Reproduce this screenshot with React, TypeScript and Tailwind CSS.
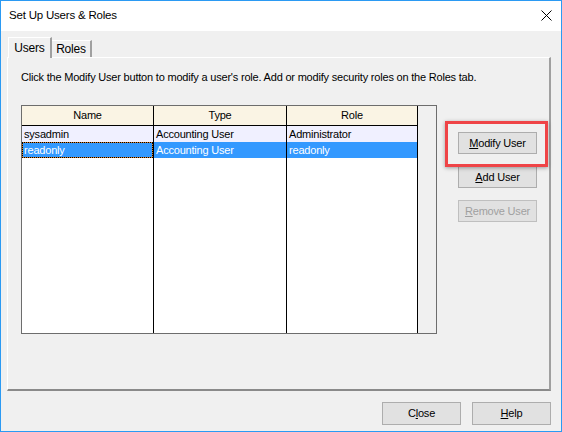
import React from 'react'

const FONT = { fontFamily: '"Liberation Sans", Arial, sans-serif' }

function Btn({ children, disabled, className = '' }: { children: React.ReactNode; disabled?: boolean; className?: string }) {
  return (
    <button
      className={`h-[22px] w-[79px] border border-[#adadad] bg-[#e1e1e1] text-[11px] leading-none flex items-center justify-center ${
        disabled ? 'text-[#a0a0a0] border-[#bfbfbf] bg-[#cccccc]' : 'text-black'
      } ${className}`}
    >
      {children}
    </button>
  )
}

const rows = [
  { name: 'sysadmin', type: 'Accounting User', role: 'Administrator' },
  { name: 'readonly', type: 'Accounting User', role: 'readonly' },
]

export default function App() {
  return (
    <div
      className="relative w-[562px] h-[432px] bg-[#f0f0f0] border border-[#2b9af3] flex flex-col text-black overflow-hidden tracking-[-0.2px]"
      style={FONT}
    >
      {/* title bar */}
      <div className="h-[30px] bg-white flex items-center justify-between pl-2 pr-[9px] shrink-0">
        <span className="text-[11.5px] tracking-[-0.2px]">Set Up Users &amp; Roles</span>
        <svg width="11" height="11" viewBox="0 0 11 11" className="mt-[-1px]">
          <path d="M0.5 0.5 L10.5 10.5 M10.5 0.5 L0.5 10.5" stroke="#000" strokeWidth="1" />
        </svg>
      </div>

      <div className="pt-[6px] pl-[6px]">
        {/* tabs */}
        <div className="flex items-end h-[20px] ml-px">
          <div className="relative z-10 -mb-px h-[21px] w-[44px] bg-[#f0f0f0] border-l border-t border-white border-r-2 border-r-[#a0a0a0] flex items-center justify-center text-[12px] pb-px">
            Users
          </div>
          <div className="h-[17px] w-[40px] border-t border-white border-r-2 border-r-[#a0a0a0] flex items-center justify-center text-[12px]">
            Roles
          </div>
        </div>

        {/* panel */}
        <div className="w-[544px] h-[334px] border-l border-t border-white border-r-2 border-b-2 border-r-[#a0a0a0] border-b-[#8a8a8a] pl-[13px] pt-[13px]">
          <p className="text-[11px] leading-[13px]">
            Click the Modify User button to modify a user's role. Add or modify security roles on the Roles tab.
          </p>

          <div className="flex mt-[21px]">
            {/* table */}
            <div className="w-[416px] h-[229px] border border-[#6d6d6d] bg-[#f0f0f0] flex">
              {[
                { key: 'name', title: 'Name', w: 'w-[132px]' },
                { key: 'type', title: 'Type', w: 'w-[133px]' },
                { key: 'role', title: 'Role', w: 'w-[131px]' },
              ].map((col, ci) => (
                <div key={col.key} className={`${col.w} h-full bg-white border-r border-black flex flex-col text-[11px]`}>
                  <div className="h-[20px] bg-[#faf4e4] border-b border-black flex items-center justify-center">
                    {col.title}
                  </div>
                  {rows.map((r, ri) => {
                    const selected = ri === 1
                    const text = r[col.key as keyof typeof r]
                    if (selected && ci === 0) {
                      return (
                        <div key={ri} className="h-[16px] bg-[#d9822b] border border-dotted border-black">
                          <div className="h-full bg-[#3399ff] text-white pl-px flex items-center">{text}</div>
                        </div>
                      )
                    }
                    return (
                      <div
                        key={ri}
                        className={`h-[16px] pl-[2px] flex items-center ${
                          selected ? 'bg-[#3399ff] text-white' : 'bg-[#f0f0ff]'
                        }`}
                      >
                        {text}
                      </div>
                    )
                  })}
                </div>
              ))}
            </div>

            {/* side buttons */}
            <div className="ml-[21px] mt-[27px] flex flex-col gap-[12px]">
              <Btn>
                <span>
                  <u>M</u>odify User
                </span>
              </Btn>
              <Btn>
                <span>
                  <u>A</u>dd User
                </span>
              </Btn>
              <Btn disabled>
                <span>
                  <u>R</u>emove User
                </span>
              </Btn>
            </div>
          </div>
        </div>

        {/* bottom buttons */}
        <div className="flex justify-end gap-[11px] mt-[11px] w-[544px]">
          <Btn className="h-[23px]">
            <span>
              C<u>l</u>ose
            </span>
          </Btn>
          <Btn className="h-[23px]">
            <span>
              <u>H</u>elp
            </span>
          </Btn>
        </div>
      </div>

      {/* red highlight annotation */}
      <div className="absolute left-[444px] top-[120px] w-[103px] h-[46px] border-[3px] border-[#ef4447] shadow-[0_1px_4px_rgba(0,0,0,0.35)]" />
    </div>
  )
}
